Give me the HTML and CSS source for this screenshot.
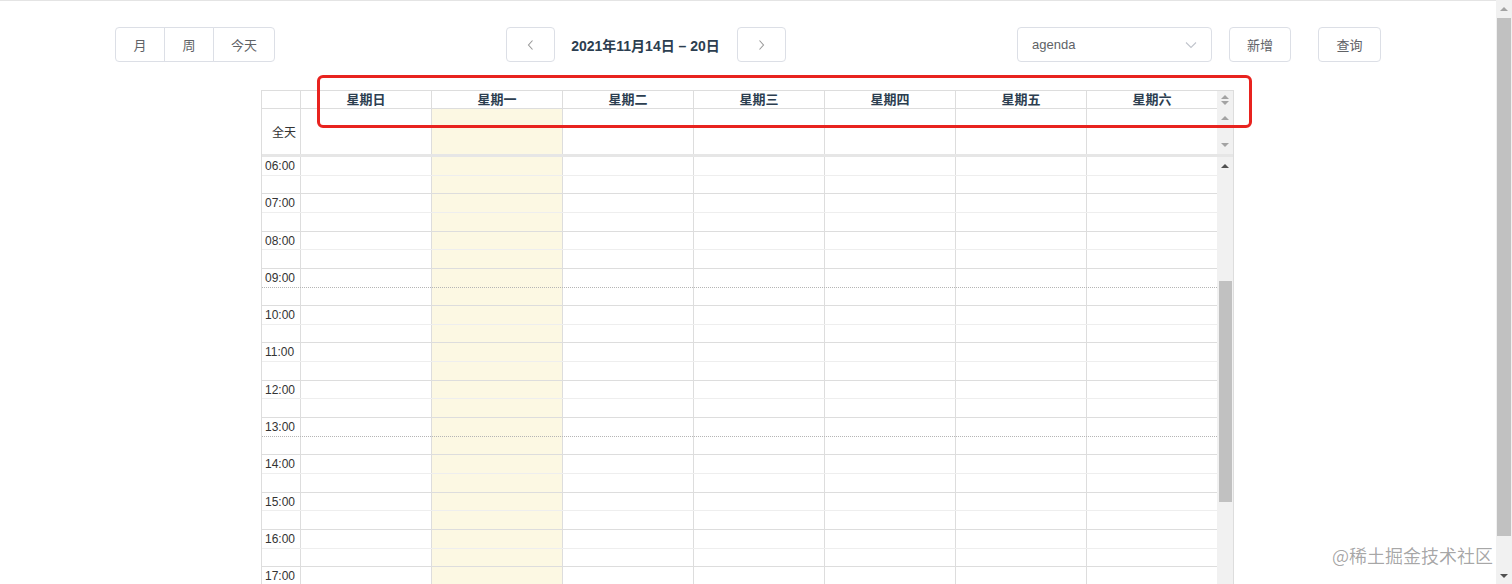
FILE: index.html
```html
<!DOCTYPE html>
<html lang="zh-CN">
<head>
<meta charset="utf-8">
<title>日历</title>
<link rel="stylesheet" href="styles.css">
</head>
<body>
<div class="page">
  <div class="main">
    <div class="toolbar">
      <div class="btn-group">
        <button class="btn g-month">月</button>
        <button class="btn g-week">周</button>
        <button class="btn g-today">今天</button>
      </div>
      <div class="nav">
        <button class="btn nav-btn prev"><svg width="12" height="12" viewBox="0 0 12 12"><polyline points="7.5,1.5 3.5,6 7.5,10.5" fill="none" stroke="#9a9a9a" stroke-width="1.1"/></svg></button>
        <div class="title">2021年11月14日 – 20日</div>
        <button class="btn nav-btn next"><svg width="12" height="12" viewBox="0 0 12 12"><polyline points="4.5,1.5 8.5,6 4.5,10.5" fill="none" stroke="#9a9a9a" stroke-width="1.1"/></svg></button>
      </div>
      <div class="actions">
        <div class="select"><span>agenda</span><svg width="12" height="8" viewBox="0 0 12 8"><polyline points="1,1.5 6,6.5 11,1.5" fill="none" stroke="#c0c4cc" stroke-width="1.1"/></svg></div>
        <button class="btn act add">新增</button>
        <button class="btn act query">查询</button>
      </div>
    </div>

    <div class="calendar">
      <div class="row-head">
        <div class="axis head-cell"></div>
        <div class="day-h">星期日</div>
        <div class="day-h">星期一</div>
        <div class="day-h">星期二</div>
        <div class="day-h">星期三</div>
        <div class="day-h">星期四</div>
        <div class="day-h">星期五</div>
        <div class="day-h">星期六</div>
        <div class="stub stub-head"><i class="tri up light"></i><i class="tri down light"></i></div>
      </div>
      <div class="row-allday">
        <div class="axis allday-label">全天</div>
        <div class="cell"></div>
        <div class="cell today"></div>
        <div class="cell"></div>
        <div class="cell"></div>
        <div class="cell"></div>
        <div class="cell"></div>
        <div class="cell"></div>
        <div class="stub stub-allday"><i class="tri up light"></i><i class="tri down light"></i></div>
      </div>
      <div class="divider"></div>
      <div class="body">
        <div class="grid">
          <div class="hour"><div class="axis time">06:00</div><div class="cell"></div><div class="cell today"></div><div class="cell"></div><div class="cell"></div><div class="cell"></div><div class="cell"></div><div class="cell"></div></div>
          <div class="hour"><div class="axis time">07:00</div><div class="cell"></div><div class="cell today"></div><div class="cell"></div><div class="cell"></div><div class="cell"></div><div class="cell"></div><div class="cell"></div></div>
          <div class="hour"><div class="axis time">08:00</div><div class="cell"></div><div class="cell today"></div><div class="cell"></div><div class="cell"></div><div class="cell"></div><div class="cell"></div><div class="cell"></div></div>
          <div class="hour dotted"><div class="axis time">09:00</div><div class="cell"></div><div class="cell today"></div><div class="cell"></div><div class="cell"></div><div class="cell"></div><div class="cell"></div><div class="cell"></div></div>
          <div class="hour"><div class="axis time">10:00</div><div class="cell"></div><div class="cell today"></div><div class="cell"></div><div class="cell"></div><div class="cell"></div><div class="cell"></div><div class="cell"></div></div>
          <div class="hour"><div class="axis time">11:00</div><div class="cell"></div><div class="cell today"></div><div class="cell"></div><div class="cell"></div><div class="cell"></div><div class="cell"></div><div class="cell"></div></div>
          <div class="hour"><div class="axis time">12:00</div><div class="cell"></div><div class="cell today"></div><div class="cell"></div><div class="cell"></div><div class="cell"></div><div class="cell"></div><div class="cell"></div></div>
          <div class="hour dotted"><div class="axis time">13:00</div><div class="cell"></div><div class="cell today"></div><div class="cell"></div><div class="cell"></div><div class="cell"></div><div class="cell"></div><div class="cell"></div></div>
          <div class="hour"><div class="axis time">14:00</div><div class="cell"></div><div class="cell today"></div><div class="cell"></div><div class="cell"></div><div class="cell"></div><div class="cell"></div><div class="cell"></div></div>
          <div class="hour"><div class="axis time">15:00</div><div class="cell"></div><div class="cell today"></div><div class="cell"></div><div class="cell"></div><div class="cell"></div><div class="cell"></div><div class="cell"></div></div>
          <div class="hour"><div class="axis time">16:00</div><div class="cell"></div><div class="cell today"></div><div class="cell"></div><div class="cell"></div><div class="cell"></div><div class="cell"></div><div class="cell"></div></div>
          <div class="hour"><div class="axis time">17:00</div><div class="cell"></div><div class="cell today"></div><div class="cell"></div><div class="cell"></div><div class="cell"></div><div class="cell"></div><div class="cell"></div></div>
          <div class="hour"><div class="axis time">18:00</div><div class="cell"></div><div class="cell today"></div><div class="cell"></div><div class="cell"></div><div class="cell"></div><div class="cell"></div><div class="cell"></div></div>
        </div>
        <div class="stub stub-body">
          <div class="sb-btn"><i class="tri up dark"></i></div>
          <div class="sb-thumb"></div>
        </div>
      </div>
      <div class="highlight"></div>
    </div>
  </div>
  <div class="page-scroll">
    <div class="sb-btn"><i class="tri up light"></i></div>
    <div class="page-thumb"></div>
    <div class="sb-btn bottom"><i class="tri down dark"></i></div>
  </div>
  <div class="watermark">@稀土掘金技术社区</div>
</div>
</body>
</html>
```

FILE: styles.css
```css
* { box-sizing: border-box; }
html, body { margin: 0; height: 584px; overflow: hidden; background: #fff; }
body { font-family: "Liberation Sans", "Noto Sans CJK SC", sans-serif; color: #333; }

.page { display: flex; height: 584px; position: relative; }
.main { flex: 1; min-width: 0; border-top: 1px solid #e4e4e4; }

/* toolbar */
.toolbar { display: flex; justify-content: space-between; align-items: center; width: 1266px; height: 35px; margin: 26px 0 0 115px; }
.btn { height: 35px; padding: 0; border: 1px solid #dcdfe6; border-radius: 4px; background: #fff; color: #606266; font-family: inherit; font-size: 13px; display: flex; align-items: center; justify-content: center; }
.btn-group { display: flex; }
.btn-group .btn { border-radius: 0; }
.btn-group .btn + .btn { margin-left: -1px; }
.btn-group .g-month { width: 50px; border-radius: 4px 0 0 4px; }
.btn-group .g-week { width: 50px; }
.btn-group .g-today { width: 62px; border-radius: 0 4px 4px 0; }
.nav { display: flex; align-items: center; }
.nav-btn { width: 49px; }
.title { margin: 0 17px 0 16px; font-size: 14px; font-weight: 700; color: #2c3e50; white-space: nowrap; }
.actions { display: flex; align-items: center; }
.select { width: 195px; height: 35px; border: 1px solid #dcdfe6; border-radius: 4px; display: flex; align-items: center; justify-content: space-between; padding: 0 14px 0 14px; color: #606266; font-size: 13px; }
.act { margin-left: 17px; width: 62px; }
.act.query { margin-left: 27px; width: 63px; }

/* calendar */
.calendar { position: relative; width: 973px; margin: 28px 0 0 261px; border: 1px solid #ddd; border-bottom: none; }
.axis { width: 38px; flex: none; }
.row-head { display: flex; height: 18px; }
.head-cell { border-bottom: 1px solid #ddd; }
.day-h { width: 131px; flex: none; border-left: 1px solid #ddd; border-bottom: 1px solid #ddd; text-align: center; font-size: 13px; font-weight: 700; line-height: 17px; color: #2c3e50; }
.row-allday { display: flex; height: 45px; }
.allday-label { display: flex; align-items: center; justify-content: flex-end; padding-right: 4px; font-size: 12px; color: #333; }
.cell { width: 131px; flex: none; border-left: 1px solid #ddd; }
.cell.today { background: #fcf8e3; }
.divider { height: 3px; background: #e6e6e6; }

.body { display: flex; height: 440px; overflow: hidden; }
.grid { width: 955px; flex: none; }
.hour { display: flex; height: 37.3px; border-bottom: 1px solid #ddd; position: relative; }
.hour::after { content: ""; position: absolute; left: 0; right: 0; top: 17.65px; border-top: 1px solid #eee; }
.hour.dotted::after { border-top: 1px dotted #b5b5b5; }
.time { font-size: 12px; line-height: 18px; padding-left: 3px; color: #333; }

/* scrollbars */
.stub { width: 16px; flex: none; background: #f1f1f1; display: flex; flex-direction: column; align-items: center; }
.stub-head { justify-content: center; gap: 2px; }
.stub-allday { justify-content: space-between; padding: 7px 0 7px; }
.tri { display: block; width: 0; height: 0; border-left: 4px solid transparent; border-right: 4px solid transparent; }
.tri.up { border-bottom: 4px solid #a3a3a3; }
.tri.down { border-top: 4px solid #a3a3a3; }
.tri.up.dark { border-bottom-color: #505050; }
.tri.down.dark { border-top-color: #505050; }
.sb-btn { width: 16px; height: 17px; flex: none; display: flex; align-items: center; justify-content: center; }
.sb-thumb { width: 13px; height: 221px; margin-top: 107px; background: #c1c1c1; }

.page-scroll { width: 16px; flex: none; height: 584px; background: #f1f1f1; display: flex; flex-direction: column; align-items: center; }
.page-thumb { width: 14px; height: 518px; margin-top: 1px; background: #c1c1c1; }
.page-scroll .bottom { margin-top: auto; }

/* overlays */
.highlight { position: absolute; left: 55px; top: -16px; width: 935px; height: 53px; border: 3px solid #e8231f; border-radius: 6px; pointer-events: none; }
.watermark { position: absolute; right: 19px; bottom: 17px; font-family: "Noto Sans CJK SC", sans-serif; font-size: 18px; line-height: 24px; color: rgba(0,0,0,0.36); white-space: nowrap; }
```
